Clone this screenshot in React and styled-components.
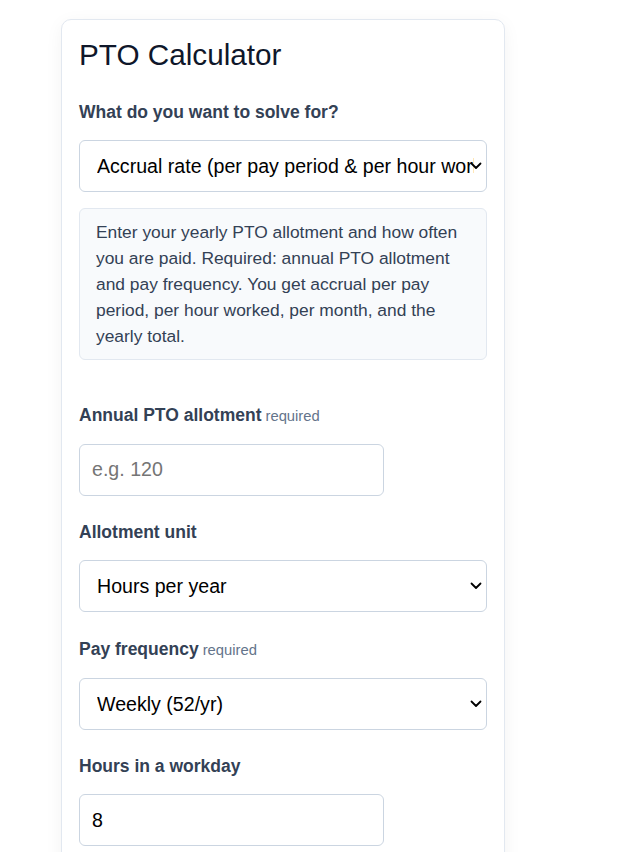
import React from 'react';
import styled, { createGlobalStyle } from 'styled-components';

const GlobalStyle = createGlobalStyle`
    html, body {
        margin: 0;
        padding: 0;
        background: #ffffff;
    }

    body {
        font-family: 'Liberation Sans', Arial, sans-serif;
    }

    * {
        box-sizing: border-box;
    }
`;

const Page = styled.div`
    display: flex;
    padding: 19px 0 0 61px;
`;

const Card = styled.div`
    display: flex;
    flex-direction: column;
    width: 444px;
    min-height: 900px;
    padding: 17.4px 17px;
    background-color: #ffffff;
    border: 1px solid #e2e8f0;
    border-radius: 10px;
    box-shadow: 0 4px 18px rgba(15, 23, 42, 0.05);
`;

const Title = styled.h1`
    margin: 0 0 27px 0;
    font-size: 29.7px;
    line-height: 35.6px;
    font-weight: 400;
    color: #0f172a;
`;

const Field = styled.div`
    display: flex;
    flex-direction: column;
    margin: 0 0 ${props => props.$after || 24.4}px 0;
`;

const Label = styled.label`
    display: block;
    margin: 0 0 16px 0;
    font-size: 17.5px;
    line-height: 24px;
    font-weight: 700;
    color: #334155;
`;

const Req = styled.span`
    margin-left: 4px;
    font-size: 14.8px;
    font-weight: 400;
    color: #64748b;
`;

const SelectWrap = styled.div`
    position: relative;
    width: 100%;
`;

const Select = styled.select`
    appearance: none;
    -webkit-appearance: none;
    width: 100%;
    height: 52px;
    padding: 0 12px 0 17px;
    font-family: 'Liberation Sans', Arial, sans-serif;
    font-size: 19.6px;
    color: #000000;
    background-color: #ffffff;
    border: 1px solid #cbd5e1;
    border-radius: 6px;
`;

const Chevron = styled.svg`
    position: absolute;
    right: 5px;
    top: 50%;
    width: 12px;
    height: 8px;
    margin-top: -4px;
    pointer-events: none;
`;

const Input = styled.input`
    width: 305px;
    height: 52px;
    padding: 0 12px;
    font-family: 'Liberation Sans', Arial, sans-serif;
    font-size: 19.6px;
    color: #000000;
    background-color: #ffffff;
    border: 1px solid #cbd5e1;
    border-radius: 6px;

    &::placeholder {
        color: #757575;
    }
`;

const Help = styled.div`
    margin: 16px 0 0 0;
    padding: 10px 16px;
    font-size: 17.4px;
    line-height: 26px;
    color: #334155;
    background-color: #f8fafc;
    border: 1px solid #e2e8f0;
    border-radius: 6px;
`;

function Dropdown({ id, value, children }) {
    return (
        <SelectWrap>
            <Select id={id} defaultValue={value}>
                {children}
            </Select>
            <Chevron viewBox="0 0 12 8">
                <path d="M1.5 1.5 L6 6 L10.5 1.5" fill="none" stroke="#000" strokeWidth="1.8" strokeLinecap="round" strokeLinejoin="round" />
            </Chevron>
        </SelectWrap>
    );
}

export default function App() {
    return (
        <>
            <GlobalStyle />
            <Page>
                <Card>
                    <Title>PTO Calculator</Title>

                    <Field $after={43}>
                        <Label htmlFor="solve">What do you want to solve for?</Label>
                        <Dropdown id="solve" value="rate">
                            <option value="rate">Accrual rate (per pay period &amp; per hour worked)</option>
                            <option value="balance">Balance on a future date</option>
                            <option value="time">Time to reach a balance</option>
                        </Dropdown>
                        <Help>
                            Enter your yearly PTO allotment and how often you are paid. Required: annual PTO
                            allotment and pay frequency. You get accrual per pay period, per hour worked,
                            per month, and the yearly total.
                        </Help>
                    </Field>

                    <Field>
                        <Label htmlFor="allot">
                            Annual PTO allotment<Req>required</Req>
                        </Label>
                        <Input id="allot" type="text" placeholder="e.g. 120" />
                    </Field>

                    <Field>
                        <Label htmlFor="unit">Allotment unit</Label>
                        <Dropdown id="unit" value="hours">
                            <option value="hours">Hours per year</option>
                            <option value="days">Days per year</option>
                        </Dropdown>
                    </Field>

                    <Field>
                        <Label htmlFor="freq">
                            Pay frequency<Req>required</Req>
                        </Label>
                        <Dropdown id="freq" value="weekly">
                            <option value="weekly">Weekly (52/yr)</option>
                            <option value="biweekly">Biweekly (26/yr)</option>
                            <option value="semimonthly">Semimonthly (24/yr)</option>
                            <option value="monthly">Monthly (12/yr)</option>
                        </Dropdown>
                    </Field>

                    <Field>
                        <Label htmlFor="hours">Hours in a workday</Label>
                        <Input id="hours" type="text" defaultValue="8" />
                    </Field>
                </Card>
            </Page>
        </>
    );
}
